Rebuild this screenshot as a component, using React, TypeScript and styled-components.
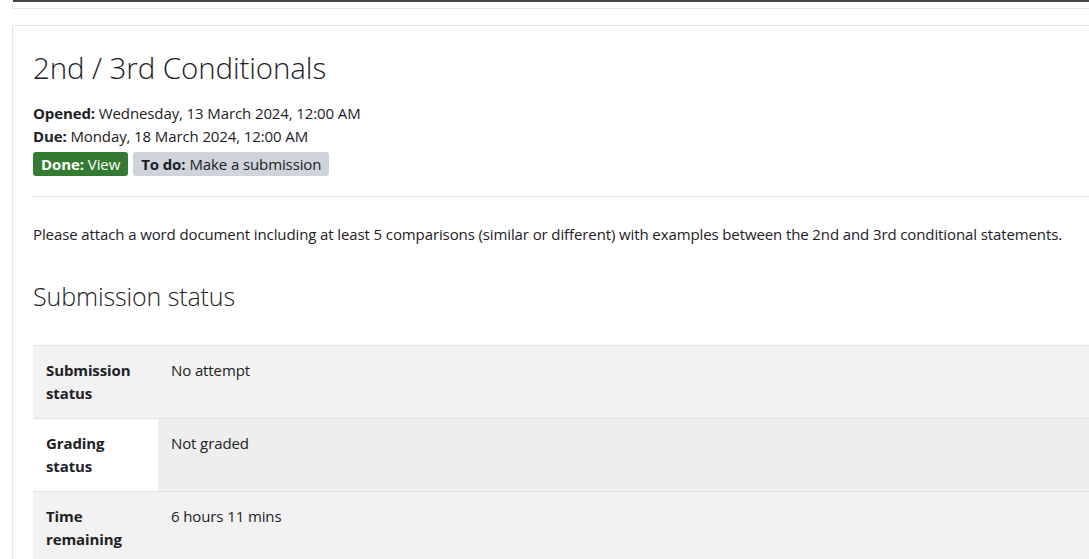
import React from "react";
import styled, { createGlobalStyle } from "styled-components";

const Global = createGlobalStyle`
  html, body { margin: 0; padding: 0; background: #fff; overflow: hidden; }
  body { font-family: "Open Sans", "Noto Sans", sans-serif; color: #1d2125; font-size: 15px; letter-spacing: -0.11px; }
`;

const Page = styled.div`
  width: 1200px;
  padding-left: 12px;
  display: flex;
  flex-direction: column;
`;

const TopBox = styled.div`
  height: 8px;
  border: 1px solid #e6e6e6;
  border-top: none;
  background: #fff;
  box-shadow: inset 0 2px 0 #454545;
`;

const Card = styled.div`
  margin-top: 16px;
  border: 1px solid #e6e6e6;
  border-right: none;
  padding: 20px 20px 0 20px;
`;

const Title = styled.h1`
  margin: 0 0 12px 0;
  font-weight: 300;
  font-size: 29.5px;
  line-height: 44px;
  letter-spacing: -0.1px;
`;

const Dates = styled.div`
  display: flex;
  flex-direction: column;
  line-height: 23px;
`;

const Strong = styled.strong`
  font-weight: 700;
`;

const Badges = styled.div`
  display: flex;
  gap: 5px;
  margin-top: 4px;
  padding-bottom: 20px;
  border-bottom: 1px solid #e6e6e6;
`;

const Badge = styled.span<{ $done?: boolean }>`
  display: inline-flex;
  align-items: center;
  height: 24px;
  padding: 0 8px;
  border-radius: 3px;
  background: ${(p) => (p.$done ? "#357a32" : "#ced4da")};
  color: ${(p) => (p.$done ? "#fff" : "#1d2125")};
  font-size: 15px;
  white-space: nowrap;
  gap: 4px;
`;

const Para = styled.p`
  margin: 26px 0 0 0;
  line-height: 23px;
`;

const Heading = styled.h2`
  margin: 32px 0 0 0;
  font-weight: 300;
  font-size: 25px;
  line-height: 36px;
`;

const Table = styled.table`
  margin-top: 31px;
  border-collapse: collapse;
  width: 100%;
`;

const Row = styled.tr`
  border-top: 1px solid #e2e2e2;
`;

const Th = styled.th<{ $bg: string }>`
  width: 99px;
  text-align: left;
  vertical-align: top;
  font-weight: 700;
  padding: 13px;
  line-height: 23px;
  background: ${(p) => p.$bg};
`;

const Td = styled.td<{ $bg: string }>`
  vertical-align: top;
  padding: 13px;
  line-height: 23px;
  background: ${(p) => p.$bg};
`;

const rows = [
  { label: ["Submission", "status"], value: "No attempt", th: "#f2f2f2", td: "#f2f2f2" },
  { label: ["Grading", "status"], value: "Not graded", th: "#ffffff", td: "#eeeeee" },
  { label: ["Time", "remaining"], value: "6 hours 11 mins", th: "#f2f2f2", td: "#f2f2f2" },
];

export default function App() {
  return (
    <>
      <Global />
      <Page>
        <TopBox />
        <Card>
          <Title>2nd / 3rd Conditionals</Title>
          <Dates>
            <div>
              <Strong>Opened:</Strong> Wednesday, 13 March 2024, 12:00 AM
            </div>
            <div>
              <Strong>Due:</Strong> Monday, 18 March 2024, 12:00 AM
            </div>
          </Dates>
          <Badges>
            <Badge $done>
              <Strong>Done:</Strong> View
            </Badge>
            <Badge>
              <Strong>To do:</Strong> Make a submission
            </Badge>
          </Badges>
          <Para>
            Please attach a word document including at least 5 comparisons (similar or different) with examples
            between the 2nd and 3rd conditional statements.
          </Para>
          <Heading>Submission status</Heading>
          <Table>
            <tbody>
              {rows.map((r) => (
                <Row key={r.value}>
                  <Th $bg={r.th}>
                    {r.label[0]}
                    <br />
                    {r.label[1]}
                  </Th>
                  <Td $bg={r.td}>{r.value}</Td>
                </Row>
              ))}
            </tbody>
          </Table>
        </Card>
      </Page>
    </>
  );
}
